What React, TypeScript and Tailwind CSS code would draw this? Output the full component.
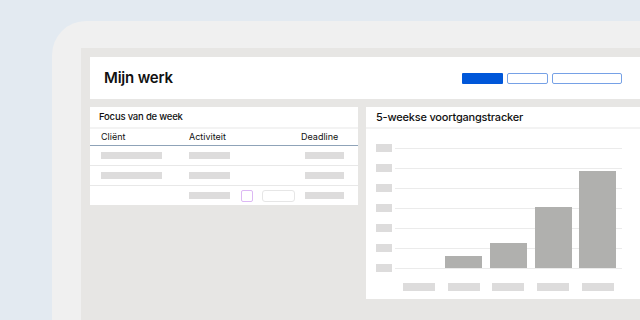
import React from "react";

const Sk = ({ w }: { w: string }) => <div className={`${w} h-[7px] bg-[#dddcdc]`} />;

export default function App() {
  const font = { fontFamily: "Inter, 'Liberation Sans', sans-serif" };
  const bars = [0, 12, 25, 61, 97];
  return (
    <div style={font} className="w-[640px] h-[320px] overflow-hidden bg-[#e3eaf1] pl-[52px] pt-[21px]">
      <div className="h-full bg-[#f0f0f0] rounded-tl-[34px] pl-[29px] pt-[27px]">
        <div className="h-full bg-[#e7e6e4] pl-[9px] pt-[9px] flex flex-col">
          {/* Header */}
          <div className="h-[42px] bg-white flex items-center pl-[14px] pr-[18px]">
            <div className="text-[15px] font-semibold text-[#111] tracking-[-0.2px]">Mijn werk</div>
            <div className="ml-auto flex gap-[4px] items-center">
              <div className="w-[41px] h-[11px] bg-[#0057d9] rounded-[1px]" />
              <div className="w-[41px] h-[11px] border border-[#76a1e6] rounded-[2px]" />
              <div className="w-[70px] h-[11px] border border-[#76a1e6] rounded-[2px]" />
            </div>
          </div>
          {/* Panels */}
          <div className="mt-[8px] flex gap-[8px] items-start">
            {/* Left panel */}
            <div className="w-[268px] bg-white flex flex-col text-[#111]">
              <div className="h-[20px] flex items-center pl-[9px] text-[9.5px] font-medium tracking-[-0.2px]">Focus van de week</div>
              <div className="h-[2px] bg-[#f3f3f3]" />
              <div className="h-[16px] flex items-center pl-[11px] text-[9px] border-b border-[#8fa3b8] box-content">
                <div className="w-[88px]">Cliënt</div>
                <div className="w-[112px]">Activiteit</div>
                <div>Deadline</div>
              </div>
              <div className="h-[19px] flex items-center pl-[11px] border-b border-[#e8e8e8] box-content">
                <div className="w-[88px]"><Sk w="w-[61px]" /></div>
                <div className="w-[112px]"><Sk w="w-[41px]" /></div>
                <div className="pl-[4px]"><Sk w="w-[39px]" /></div>
              </div>
              <div className="h-[19px] flex items-center pl-[11px] border-b border-[#e8e8e8] box-content">
                <div className="w-[88px]"><Sk w="w-[61px]" /></div>
                <div className="w-[112px]"><Sk w="w-[41px]" /></div>
                <div className="pl-[4px]"><Sk w="w-[39px]" /></div>
              </div>
              <div className="h-[19px] flex items-center pl-[11px]">
                <div className="w-[88px]" />
                <div className="w-[112px] flex items-center">
                  <Sk w="w-[41px]" />
                  <div className="ml-[11px] w-[12px] h-[12px] border border-[#dcb8f4] rounded-[2px]" />
                  <div className="ml-[9px] w-[33px] h-[12px] border border-[#e6e6e6] rounded-[3px]" />
                </div>
                <div className="pl-[4px]"><Sk w="w-[39px]" /></div>
              </div>
            </div>
            {/* Right panel */}
            <div className="flex-1 bg-white flex flex-col">
              <div className="h-[20px] flex items-center pl-[10px] text-[11px] font-medium text-[#111] tracking-[-0.2px]">5-weekse voortgangstracker</div>
              <div className="h-[2px] bg-[#f3f3f3]" />
              <div className="relative pl-[10px] pr-[18px] pt-[9px] pb-[8px]">
                {[0, 1, 2, 3, 4, 5, 6].map((i) => (
                  <div key={i} className="h-[20px] flex items-center">
                    <div className="w-[16px] h-[8px] bg-[#dddcdc]" />
                    <div className="ml-[3px] flex-1 h-px bg-[#ebebeb] self-start mt-[10px]" />
                  </div>
                ))}
                <div className="ml-[21px] w-[223px] grid grid-cols-5 justify-items-center mt-[5px]">
                  {[0, 1, 2, 3, 4].map((i) => (
                    <div key={i} className="w-[32px] h-[8px] bg-[#dddcdc]" />
                  ))}
                </div>
                <div className="absolute left-[31px] top-[29px] w-[223px] h-[110px] grid grid-cols-5 justify-items-center items-end">
                  {bars.map((h, i) => (
                    <div key={i} className="w-[37px] bg-[#b0b0ae]" style={{ height: h }} />
                  ))}
                </div>
              </div>
            </div>
          </div>
        </div>
      </div>
    </div>
  );
}
